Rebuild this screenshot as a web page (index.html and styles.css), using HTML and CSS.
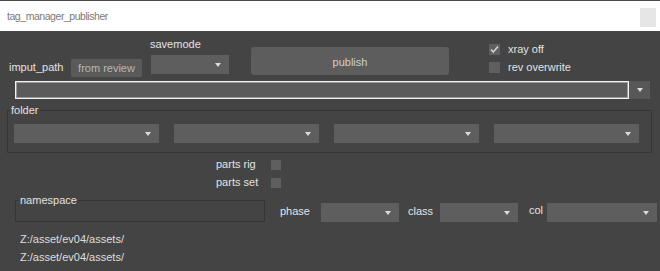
FILE: index.html
```html
<!DOCTYPE html>
<html lang="en">
<head>
  <meta charset="UTF-8" />
  <meta name="viewport" content="width=device-width, initial-scale=1.0"/>
  <title>tag_manager_publisher</title>
  <link rel="stylesheet" href="styles.css">
</head>
<body>
  <div class="titlebar">
    <span class="title">tag_manager_publisher</span>
    <button class="close"></button>
  </div>

  <div class="top-row">
    <span class="path-label">imput_path</span>
    <button class="btn review">from review</button>
    <div class="savemode">
      <span class="savemode-label">savemode</span>
      <div class="combo savemode-combo"><span class="arrow"></span></div>
    </div>
    <button class="btn publish">publish</button>
    <div class="checks">
      <div class="check">
        <span class="box">
          <svg width="11" height="11" viewBox="0 0 11 11"><polyline points="2,5.5 4.3,8 9,2.5" fill="none" stroke="#d0d0d0" stroke-width="1.6"/></svg>
        </span>
        <span>xray off</span>
      </div>
      <div class="check">
        <span class="box"></span>
        <span>rev overwrite</span>
      </div>
    </div>
  </div>

  <div class="path-row">
    <div class="path-input"></div>
    <div class="path-drop"><span class="arrow"></span></div>
  </div>

  <fieldset class="group folder">
    <legend>folder</legend>
    <div class="folder-combos">
      <div class="combo"><span class="arrow"></span></div>
      <div class="combo"><span class="arrow"></span></div>
      <div class="combo"><span class="arrow"></span></div>
      <div class="combo"><span class="arrow"></span></div>
    </div>
  </fieldset>

  <div class="parts">
    <div class="part"><span class="part-label">parts rig</span><span class="box small"></span></div>
    <div class="part"><span class="part-label">parts set</span><span class="box small"></span></div>
  </div>

  <div class="bottom-row">
    <fieldset class="group namespace">
      <legend>namespace</legend>
    </fieldset>
    <span class="field-label phase-label">phase</span>
    <div class="combo phase-combo"><span class="arrow"></span></div>
    <span class="field-label class-label">class</span>
    <div class="combo class-combo"><span class="arrow"></span></div>
    <span class="field-label col-label">col</span>
    <div class="combo col-combo"><span class="arrow"></span></div>
  </div>

  <div class="paths">
    <div>Z:/asset/ev04/assets/</div>
    <div>Z:/asset/ev04/assets/</div>
  </div>
</body>
</html>
```

FILE: styles.css
```css
body {
  margin: 0;
  background: #444444;
  font-family: "Liberation Sans", Arial, sans-serif;
  font-size: 11px;
  line-height: 13px;
  color: #e2e2e2;
  overflow: hidden;
}

/* title bar */
.titlebar {
  display: flex;
  justify-content: space-between;
  align-items: center;
  height: 30px;
  border-top: 1px solid #4a4a4a;
  background: #fff;
  padding: 0 4px 0 7px;
}

.title {
  font-size: 10.5px;
  letter-spacing: -0.45px;
  color: #7a7a7a;
}

.close {
  align-self: flex-start;
  margin-top: 7px;
  width: 16px;
  height: 19px;
  padding: 0;
  border: none;
  background: #e6e6e6;
}

/* top row */
.top-row {
  display: flex;
  align-items: flex-start;
  padding-left: 9px;
  height: 50px;
}

.path-label {
  width: 62px;
  margin-top: 30px;
}

.btn {
  padding: 0;
  border: none;
  border-radius: 2px;
  font-family: inherit;
  font-size: 11px;
  line-height: 13px;
}

.review {
  width: 71px;
  height: 18px;
  margin-top: 28px;
  padding-top: 1px;
  background: #5a5a5a;
  color: #b8b8b8;
}

.savemode {
  display: flex;
  flex-direction: column;
  margin-left: 8px;
  margin-top: 7px;
}

.savemode-label {
  height: 13px;
  margin-bottom: 4px;
}

.savemode-combo {
  width: 78px;
  margin-left: 1px;
}

.publish {
  width: 198px;
  height: 28px;
  margin-top: 16px;
  margin-left: 22px;
  padding-top: 2px;
  border-radius: 3px;
  background: #5d5d5d;
  color: #cfcfcf;
}

.checks {
  display: flex;
  flex-direction: column;
  gap: 5px;
  margin-top: 12px;
  margin-left: 40px;
}

.check {
  display: flex;
  align-items: center;
  gap: 8px;
}

.box {
  display: block;
  width: 11px;
  height: 11px;
  background: #5f5f5f;
}

.box svg {
  display: block;
}

.box.small {
  width: 10px;
  height: 10px;
}

/* combos */
.combo {
  display: flex;
  justify-content: flex-end;
  align-items: center;
  box-sizing: border-box;
  height: 19px;
  padding-right: 8px;
  background: #5e5e5e;
}

.arrow {
  width: 0;
  height: 0;
  border-left: 3px solid transparent;
  border-right: 3px solid transparent;
  border-top: 4px solid #dcdcdc;
}

/* path row */
.path-row {
  display: flex;
  margin-left: 15px;
  height: 18px;
}

.path-input {
  box-sizing: border-box;
  width: 614px;
  border: 1px solid #f2f2f2;
  box-shadow: inset 0 0 0 1px #9a9a9a;
  background: #5b5b5b;
}

.path-drop {
  display: flex;
  justify-content: center;
  align-items: center;
  width: 21px;
  background: #585858;
}

/* group boxes */
.group {
  margin: 0;
  border: 1px solid #363636;
  min-width: 0;
}

.group legend {
  padding: 0 1px;
  line-height: 13px;
}

.folder {
  margin: 5px 8px 0 7px;
  padding: 7px 11px 9px 6px;
}

.folder legend {
  margin-left: -4px;
}

.folder-combos {
  display: flex;
  gap: 15px;
}

.folder-combos .combo {
  width: 145px;
}

/* parts */
.parts {
  display: flex;
  flex-direction: column;
  gap: 5px;
  margin-top: 5px;
  padding-left: 216px;
}

.part {
  display: flex;
  align-items: center;
  height: 13px;
}

.part-label {
  width: 55px;
}

/* bottom row */
.bottom-row {
  display: flex;
  align-items: flex-start;
  margin-top: 5px;
}

.namespace {
  width: 250px;
  box-sizing: border-box;
  margin-left: 15px;
  padding: 0 0 14px;
}

.namespace legend {
  margin-left: 3px;
}

.field-label {
  margin-top: 11px;
}

.bottom-row .combo {
  margin-top: 9px;
}

.phase-label {
  width: 41px;
  margin-left: 15px;
}

.phase-combo {
  width: 78px;
}

.class-label {
  width: 32px;
  margin-left: 9px;
}

.class-combo {
  width: 78px;
}

.col-label {
  width: 18px;
  margin-left: 11px;
  margin-top: 10px;
}

.col-combo {
  width: 110px;
}

/* paths */
.paths {
  margin-top: 8px;
  padding-left: 20px;
  line-height: 18px;
  color: #dedede;
}
```
